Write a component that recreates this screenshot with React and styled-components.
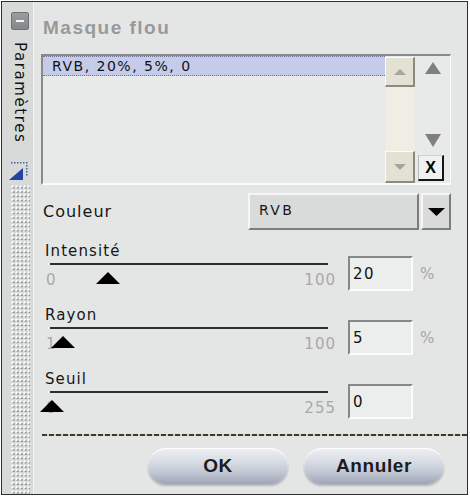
import React from 'react';
import styled, { createGlobalStyle } from 'styled-components';

const GlobalStyle = createGlobalStyle`
  html, body { margin: 0; padding: 0; background: #ffffff; }
  body { font-family: "DejaVu Sans", Verdana, sans-serif; color: #1a1a1a; }
  * { box-sizing: border-box; }
`;

const Frame = styled.div`
  margin: 1px 0 0 1px;
  width: 467px;
  height: 494px;
  border: 1px solid #2f2f2f;
  display: flex;
  background: #e4e6e5;
  overflow: hidden;
`;

const Sidebar = styled.aside`
  width: 32px;
  flex: none;
  display: flex;
  flex-direction: column;
  align-items: flex-start;
  padding: 10px 0 0 9px;
  background: #d8dada;
  border-right: 1px solid #f2f4f3;
`;

const MinusButton = styled.div`
  width: 18px;
  height: 18px;
  border-radius: 2px;
  background: linear-gradient(#9a9c9f, #85878a);
  border: 1px solid #6f7174;
  display: flex;
  align-items: center;
  justify-content: center;
  &::after {
    content: '';
    width: 8px;
    height: 2px;
    background: #f4f4f4;
  }
`;

const VerticalLabel = styled.div`
  margin-top: 12px;
  writing-mode: vertical-rl;
  font-size: 15px;
  letter-spacing: 1.6px;
  line-height: 18px;
  color: #111;
`;

const CornerIcon = styled.svg`
  margin: 17px 0 0 -2px;
  display: block;
`;

const Grip = styled.div`
  flex: 1;
  width: 19px;
  margin: 4px 0 0 0;
  background-image:
    radial-gradient(circle at 1.5px 1.5px, #ffffff 0.9px, transparent 1.4px),
    radial-gradient(circle at 2.6px 2.6px, #868888 0.8px, transparent 1.3px);
  background-size: 4px 4.3px;
`;

const Main = styled.main`
  flex: 1;
  display: flex;
  flex-direction: column;
  padding: 16px 16px 0 7px;
  min-width: 0;
`;

const Title = styled.h1`
  margin: 0 0 16px 2px;
  font-family: "Liberation Sans", Arial, sans-serif;
  font-weight: bold;
  font-size: 19px;
  letter-spacing: 1.5px;
  line-height: 20px;
  color: #999999;
`;

const ListBox = styled.div`
  height: 131px;
  display: flex;
  border-top: 2px solid #8a8a8a;
  border-left: 2px solid #8a8a8a;
  border-right: 1px solid #fbfbfb;
  border-bottom: 2px solid #fbfbfb;
  background: #e8eae9;
`;

const List = styled.div`
  flex: 1;
  display: flex;
  flex-direction: column;
`;

const ListRow = styled.div`
  height: 20px;
  display: flex;
  align-items: center;
  padding-left: 9px;
  font-size: 14px;
  letter-spacing: 1.5px;
  color: #111;
  background: ${p => (p.$selected ? '#c5ccea' : 'transparent')};
  border-top: 1px dotted ${p => (p.$selected ? '#6c7498' : 'transparent')};
  border-bottom: 1px dotted ${p => (p.$selected ? '#6c7498' : 'transparent')};
`;

const ScrollBar = styled.div`
  width: 30px;
  margin-top: 1px;
  display: flex;
  flex-direction: column;
`;

const ScrollButton = styled.div`
  height: ${p => p.$h}px;
  background: #e3e1d3;
  border-top: 1px solid #fbfaf4;
  border-left: 1px solid #fbfaf4;
  border-right: 2px solid #8d8b7f;
  border-bottom: 2px solid #8d8b7f;
  display: flex;
  align-items: center;
  justify-content: center;
`;

const ScrollTrack = styled.div`
  flex: 1;
  background-color: #ebe9e0;
  background-image:
    linear-gradient(45deg, #f3f1ea 25%, transparent 25%, transparent 75%, #f3f1ea 75%),
    linear-gradient(45deg, #f3f1ea 25%, transparent 25%, transparent 75%, #f3f1ea 75%);
  background-size: 2px 2px;
  background-position: 0 0, 1px 1px;
`;

const SideColumn = styled.div`
  width: 35px;
  padding: 6px 0 0 3px;
  display: flex;
  flex-direction: column;
  align-items: flex-start;
`;

const SideArrow = styled.svg`
  display: block;
  margin-left: 7px;
`;

const Spacer = styled.div`
  flex: 1;
`;

const DeleteButton = styled.div`
  width: 26px;
  height: 26px;
  margin: 8px 0 2px 0;
  background: #eff1f0;
  border-top: 1px solid #cfd1d0;
  border-left: 1px solid #b4b6b5;
  border-right: 2px solid #161616;
  border-bottom: 2px solid #161616;
  display: flex;
  align-items: center;
  justify-content: center;
  font-family: "Liberation Sans", Arial, sans-serif;
  font-weight: bold;
  font-size: 16px;
  color: #000;
`;

const ColorRow = styled.div`
  margin-top: 8px;
  height: 37px;
  display: grid;
  grid-template-columns: 1fr 171px 30px;
  column-gap: 2px;
  align-items: center;
`;

const FieldLabel = styled.span`
  padding-left: 2px;
  font-size: 16px;
  letter-spacing: 1px;
  color: #161616;
`;

const bevel = `
  background: #d9dbda;
  border-top: 2px solid #f6f6f6;
  border-left: 2px solid #f6f6f6;
  border-right: 2px solid #7c7c7c;
  border-bottom: 2px solid #7c7c7c;
`;

const SelectBox = styled.div`
  ${bevel}
  height: 37px;
  display: flex;
  align-items: center;
  padding: 0 0 4px 9px;
  font-size: 14px;
  letter-spacing: 2.4px;
  color: #161616;
`;

const SelectArrow = styled.div`
  ${bevel}
  height: 37px;
  display: flex;
  align-items: center;
  justify-content: center;
`;

const Sliders = styled.div`
  margin-top: 12px;
  padding-left: 4px;
  display: flex;
  flex-direction: column;
  gap: 15px;
`;

const SliderBlock = styled.div`
  height: 49px;
  display: grid;
  grid-template-columns: 291px 65px auto;
  column-gap: 12px;
`;

const SliderMain = styled.div`
  display: flex;
  flex-direction: column;
`;

const SliderLabel = styled.div`
  font-size: 15px;
  letter-spacing: 1.1px;
  line-height: 18px;
  color: #161616;
`;

const TrackArea = styled.div`
  position: relative;
  margin-top: 3px;
`;

const TrackLine = styled.div`
  height: 2px;
  margin: 0 8px 0 5px;
  background: #2e2e2e;
`;

const ScaleRow = styled.div`
  margin-top: 6px;
  display: flex;
  justify-content: space-between;
  padding-left: 1px;
  font-size: 15px;
  letter-spacing: 1px;
  line-height: 18px;
  color: #a9a9a9;
`;

const Thumb = styled.svg`
  position: absolute;
  top: 9px;
  display: block;
`;

const ValueBox = styled.div`
  margin-top: 14px;
  height: 35px;
  display: flex;
  align-items: center;
  padding-left: 3px;
  background: #eceeed;
  border-top: 2px solid #878787;
  border-left: 2px solid #878787;
  border-right: 2px solid #fbfbfb;
  border-bottom: 2px solid #fbfbfb;
  font-size: 15px;
  letter-spacing: 1.5px;
  color: #111;
`;

const Unit = styled.div`
  margin: 14px 0 0 -5px;
  height: 35px;
  display: flex;
  align-items: center;
  font-size: 15px;
  color: #a5a5a5;
`;

const Separator = styled.div`
  margin: 15px -16px 0 1px;
  height: 2px;
  background: repeating-linear-gradient(to right, #3b3b34 0 5px, #d6d1b5 5px 7px);
`;

const ButtonRow = styled.div`
  margin-top: 12px;
  padding-right: 7px;
  display: flex;
  justify-content: flex-end;
  gap: 16px;
`;

const PillButton = styled.button`
  width: 140px;
  height: 36px;
  border: none;
  border-radius: 18px;
  background: linear-gradient(#eef0f4 0%, #dadee6 35%, #bfc5d1 70%, #9ea5b5 100%);
  box-shadow: 0 2px 2px rgba(0, 0, 0, 0.22), inset 0 1px 0 #ffffff;
  font-family: "Liberation Sans", Arial, sans-serif;
  font-weight: bold;
  font-size: 19px;
  letter-spacing: 0.6px;
  color: #1c1c1c;
  padding: 0;
`;

const TriUp = ({ w, h, color }) => (
  <svg width={w} height={h} viewBox={`0 0 ${w} ${h}`}>
    <polygon points={`0,${h} ${w / 2},0 ${w},${h}`} fill={color} />
  </svg>
);

const TriDown = ({ w, h, color }) => (
  <svg width={w} height={h} viewBox={`0 0 ${w} ${h}`}>
    <polygon points={`0,0 ${w},0 ${w / 2},${h}`} fill={color} />
  </svg>
);

const sliders = [
  { label: 'Intensité', min: 0, max: 100, value: 20, unit: '%' },
  { label: 'Rayon', min: 1, max: 100, value: 5, unit: '%' },
  { label: 'Seuil', min: 0, max: 255, value: 0, unit: '' },
];

const TRACK = 278;

function Slider({ label, min, max, value, unit }) {
  const frac = (value - min) / (max - min);
  return (
    <SliderBlock>
      <SliderMain>
        <SliderLabel>{label}</SliderLabel>
        <TrackArea>
          <TrackLine />
          <ScaleRow>
            <span>{min}</span>
            <span>{max}</span>
          </ScaleRow>
          <Thumb width="24" height="12" viewBox="0 0 24 12" style={{ left: `${7 + frac * TRACK - 12}px` }}>
            <polygon points="0,12 12,0 24,12" fill="#000" />
          </Thumb>
        </TrackArea>
      </SliderMain>
      <ValueBox>{value}</ValueBox>
      <Unit>{unit}</Unit>
    </SliderBlock>
  );
}

export default function App() {
  return (
    <>
      <GlobalStyle />
      <Frame>
        <Sidebar>
          <MinusButton />
          <VerticalLabel>Paramètres</VerticalLabel>
          <CornerIcon width="20" height="20" viewBox="0 0 20 20">
            {[2, 5, 8, 11, 14, 17].map(x => (
              <rect key={'t' + x} x={x} y="1" width="1.5" height="1.5" fill="#4d5b93" />
            ))}
            {[4, 7, 10, 13].map(y => (
              <rect key={'r' + y} x="17" y={y} width="1.5" height="1.5" fill="#4d5b93" />
            ))}
            <polygon points="0,19 14,7 14,19" fill="#2343a6" />
          </CornerIcon>
          <Grip />
        </Sidebar>
        <Main>
          <Title>Masque flou</Title>
          <ListBox>
            <List>
              <ListRow $selected>RVB, 20%, 5%, 0</ListRow>
            </List>
            <ScrollBar>
              <ScrollButton $h={30}>
                <TriUp w={12} h={6} color="#a6a59d" />
              </ScrollButton>
              <ScrollTrack />
              <ScrollButton $h={32}>
                <TriDown w={12} h={6} color="#a6a59d" />
              </ScrollButton>
            </ScrollBar>
            <SideColumn>
              <SideArrow width="16" height="12" viewBox="0 0 16 12">
                <polygon points="0,12 8,0 16,12" fill="#7f7f7f" />
              </SideArrow>
              <Spacer />
              <SideArrow width="16" height="13" viewBox="0 0 16 13">
                <polygon points="0,0 16,0 8,13" fill="#7f7f7f" />
              </SideArrow>
              <DeleteButton>X</DeleteButton>
            </SideColumn>
          </ListBox>
          <ColorRow>
            <FieldLabel>Couleur</FieldLabel>
            <SelectBox>RVB</SelectBox>
            <SelectArrow>
              <TriDown w={17} h={8} color="#000" />
            </SelectArrow>
          </ColorRow>
          <Sliders>
            {sliders.map(s => (
              <Slider key={s.label} {...s} />
            ))}
          </Sliders>
          <Separator />
          <ButtonRow>
            <PillButton>OK</PillButton>
            <PillButton>Annuler</PillButton>
          </ButtonRow>
        </Main>
      </Frame>
    </>
  );
}
